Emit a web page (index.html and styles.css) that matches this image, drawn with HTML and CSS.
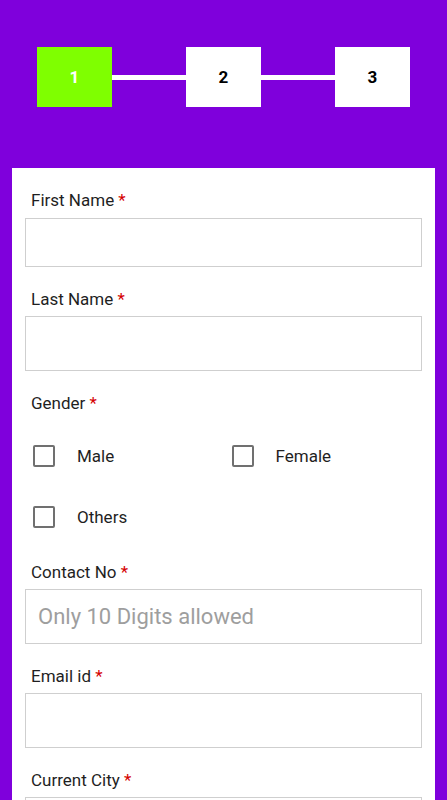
FILE: index.html
```html
<!DOCTYPE html>
<html lang="en">
<head>
    <meta charset="UTF-8">
    <meta name="viewport" content="width=device-width, initial-scale=1.0">
    <title>Registration</title>
    <link rel="stylesheet" href="styles.css">
</head>
<body>

    <div class="stepper">
        <div class="step active">1</div>
        <div class="step-line"></div>
        <div class="step">2</div>
        <div class="step-line"></div>
        <div class="step">3</div>
    </div>

    <form class="form-card">
        <div class="field">
            <label class="field-label">First Name <span class="req">*</span></label>
            <input class="text-input short" type="text">
        </div>

        <div class="field">
            <label class="field-label">Last Name <span class="req">*</span></label>
            <input class="text-input" type="text">
        </div>

        <div class="field">
            <label class="field-label">Gender <span class="req">*</span></label>
            <div class="options">
                <label class="option"><span class="check"></span>Male</label>
                <label class="option"><span class="check"></span>Female</label>
                <label class="option"><span class="check"></span>Others</label>
            </div>
        </div>

        <div class="field">
            <label class="field-label">Contact No <span class="req">*</span></label>
            <input class="text-input" type="text" placeholder="Only 10 Digits allowed">
        </div>

        <div class="field">
            <label class="field-label">Email id <span class="req">*</span></label>
            <input class="text-input" type="text">
        </div>

        <div class="field">
            <label class="field-label">Current City <span class="req">*</span></label>
            <input class="text-input" type="text">
        </div>
    </form>

</body>
</html>
```

FILE: styles.css
```css
* {
    margin: 0;
    padding: 0;
    box-sizing: border-box;
}

body {
    font-family: Roboto, "Liberation Sans", Arial, sans-serif;
    background-color: #7f00dc;
    height: 800px;
    overflow: hidden;
}


.stepper {
    display: flex;
    align-items: center;
    padding: 47px 37px 0;
}


.step {
    width: 75px;
    height: 60px;
    background-color: #fff;
    color: #000;
    font-size: 17px;
    font-weight: 700;
    display: flex;
    justify-content: center;
    align-items: center;
}


.step.active {
    background-color: #7fff00;
    color: #fff;
}


.step-line {
    flex: 1;
    height: 5px;
    background-color: #fff;
}


.form-card {
    margin: 61px 12px 0;
    padding: 0 13px 40px;
    background-color: #fff;
}


.field {
    padding-top: 22px;
}


.field-label {
    display: block;
    padding-left: 6px;
    margin-bottom: 7px;
    font-size: 17px;
    line-height: 20px;
    color: #1f1f1f;
}


.field-label .req {
    color: #d50000;
}


.text-input {
    display: block;
    width: 100%;
    height: 55px;
    border: 1px solid #cfcfcf;
    padding: 0 12px;
    font-family: inherit;
    font-size: 22px;
    color: #222;
    outline: none;
}


.text-input.short {
    height: 49px;
    margin-top: 8px;
}


.text-input::placeholder {
    color: #9e9e9e;
}


.options {
    display: grid;
    grid-template-columns: 1fr 1fr;
    grid-auto-rows: 40px;
    row-gap: 21px;
    margin-top: 23px;
    margin-bottom: 3px;
}


.option {
    display: flex;
    align-items: center;
    padding-left: 8px;
    font-size: 17px;
    color: #1f1f1f;
}


.option .check {
    width: 22px;
    height: 22px;
    border: 2px solid #707070;
    border-radius: 2px;
    margin-right: 22px;
}
```
